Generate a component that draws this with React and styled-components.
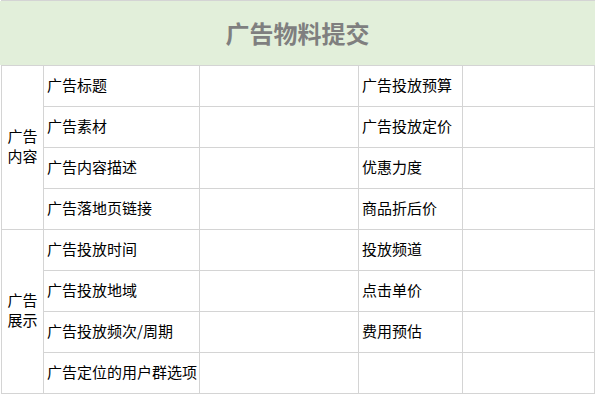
import React from 'react';
import styled, { createGlobalStyle } from 'styled-components';

const GlobalStyle = createGlobalStyle`
  html, body {
    margin: 0;
    padding: 0;
    background: #ffffff;
  }
  body {
    font-family: "Noto Sans CJK SC", "Noto Sans", sans-serif;
  }
`;

const Page = styled.div`
  padding-left: 1px;
`;

// the sheet: grey background shows through the 1px gaps as grid lines
const Sheet = styled.div`
  display: grid;
  grid-template-columns: 41px 155px 158px 103px 131px;
  grid-template-rows: 64px repeat(8, 40px);
  gap: 1px;
  padding: 1px;
  width: max-content;
  background: #d4d4d4;
`;

const Title = styled.div`
  grid-column: 1 / -1;
  margin: 0 -1px 0 -2px;
  padding-bottom: 2px;
  background: #e2efda;
  display: flex;
  align-items: center;
  justify-content: center;
  font-size: 24px;
  font-weight: 700;
  color: #7f7f7f;
`;

const GroupCell = styled.div`
  grid-column: 1;
  grid-row: ${p => p.$row} / span 4;
  background: #ffffff;
  display: flex;
  align-items: center;
  justify-content: center;
  padding: 0 5px 3px;
  text-align: center;
  font-size: 15px;
  line-height: 20px;
  color: #000000;
`;

const Cell = styled.div`
  grid-column: ${p => p.$col};
  grid-row: ${p => p.$row};
  background: #ffffff;
  display: flex;
  align-items: center;
  padding: 0 3px 3px;
  font-size: 15px;
  color: #000000;
  white-space: nowrap;
`;

const rows = [
  ['广告标题', '广告投放预算'],
  ['广告素材', '广告投放定价'],
  ['广告内容描述', '优惠力度'],
  ['广告落地页链接', '商品折后价'],
  ['广告投放时间', '投放频道'],
  ['广告投放地域', '点击单价'],
  ['广告投放频次/周期', '费用预估'],
  ['广告定位的用户群选项', ''],
];

export default function App() {
  return (
    <Page>
      <GlobalStyle />
      <Sheet>
        <Title>广告物料提交</Title>
        <GroupCell $row={2}>广告内容</GroupCell>
        <GroupCell $row={6}>广告展示</GroupCell>
        {rows.map(([a, b], i) => (
          <React.Fragment key={i}>
            <Cell $col={2} $row={i + 2}>{a}</Cell>
            <Cell $col={3} $row={i + 2} />
            <Cell $col={4} $row={i + 2}>{b}</Cell>
            <Cell $col={5} $row={i + 2} />
          </React.Fragment>
        ))}
      </Sheet>
    </Page>
  );
}
